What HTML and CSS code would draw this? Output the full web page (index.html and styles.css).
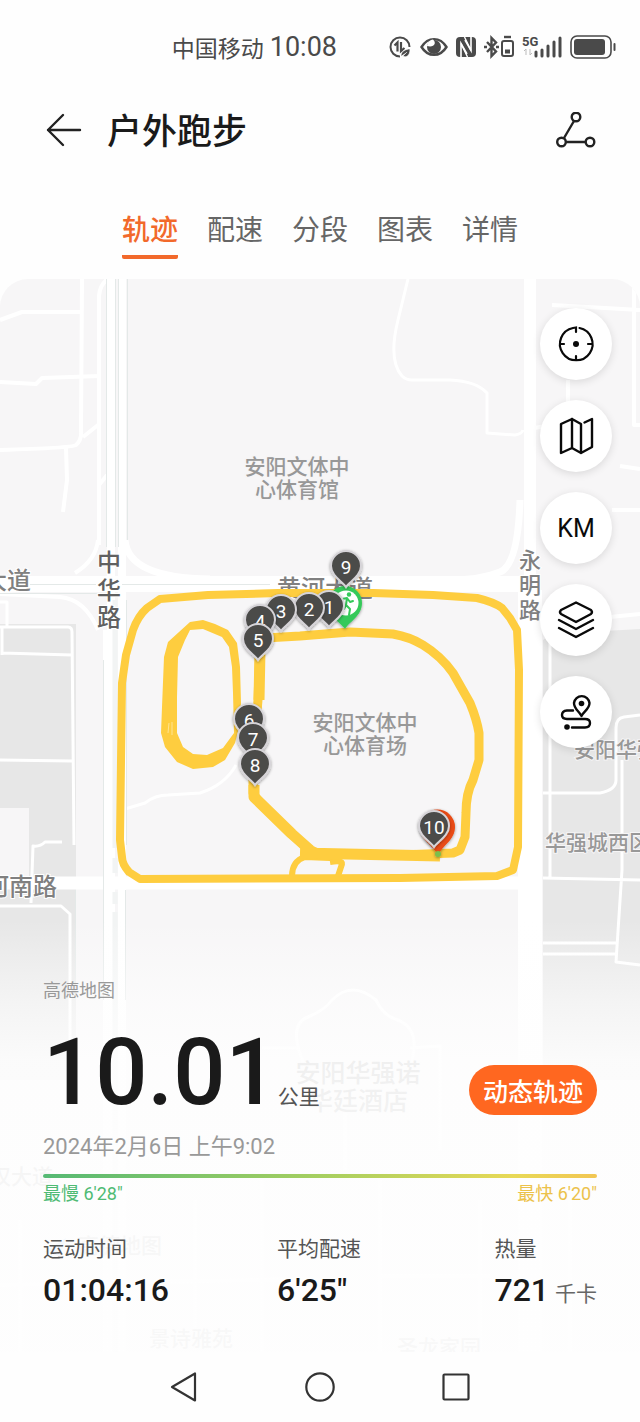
FILE: index.html
```html
<!DOCTYPE html>
<html lang="zh-CN">
<head>
    <meta charset="UTF-8">
    <meta name="viewport" content="width=device-width, initial-scale=1.0">
    <title>户外跑步</title>
    <link rel="stylesheet" href="styles.css">
</head>
<body>
    <div class="status-bar">
        <span class="carrier">中国移动</span>
        <span class="clock">10:08</span>
        <div class="status-icons">
            <svg width="24" height="24" viewBox="0 0 24 24" fill="none" stroke="#4a4a4a" stroke-width="2">
                <path d="M12 21.500A9.500 9.500 0 1 1 21.500 12"/>
                <path d="M6.500 10.500l3-3v9M13 7v9l3.500-3" stroke-width="2.200"/>
                <path d="M13 21c0-5 5-7 9-7 0 7-4 9-7 7l4-4" fill="#4a4a4a" stroke="#fff" stroke-width="0.600"/>
            </svg>
            <svg width="28" height="24" viewBox="0 0 28 24">
                <path d="M1.500 12C8 1.500 20 1.500 26.500 12 20 22.500 8 22.500 1.500 12z" fill="none" stroke="#4a4a4a" stroke-width="2.400"/>
                <circle cx="14" cy="12" r="7" fill="#4a4a4a"/>
                <path d="M13 4.500C17 8 14 13 7 11 8 7 9.500 5 13 4.500z" fill="#fff"/>
            </svg>
            <svg width="20" height="22" viewBox="0 0 20 22">
                <rect x="0" y="1" width="20" height="20" rx="4" fill="#4a4a4a"/>
                <path d="M5 21V7.500L11 18M15 1v13.500L9 4" fill="none" stroke="#fff" stroke-width="1.600"/>
                <path d="M8.500 1L15 14.500M5 7.500L11.500 21" stroke="#fff" stroke-width="1.400"/>
            </svg>
            <svg width="30" height="24" viewBox="0 0 30 24" fill="none" stroke="#4a4a4a" stroke-width="2.400">
                <path d="M3 7l9 9.500-4.500 4.500V3L12 7.500 3 17"/>
                <path d="M0 12h3M12 12h3"/>
                <rect x="18" y="6" width="11" height="15" rx="2" stroke-width="2"/>
                <path d="M20 2h7"/>
                <path d="M21 16.500h5" stroke-width="4"/>
            </svg>
            <svg width="40" height="24" viewBox="0 0 40 24">
                <text x="0" y="11" class="net-type">5G</text>
                <path d="M4 14v6M2 16l2-2M8 14v6l2-2" fill="none" stroke="#bbb" stroke-width="1"/>
                <path d="M14 21v-4M20 21v-6M26 21v-10M32 21v-14M38 21v-18" stroke="#4a4a4a" stroke-width="3" stroke-linecap="round"/>
            </svg>
            <svg width="46" height="24" viewBox="0 0 46 24">
                <rect x="1" y="1" width="40" height="22" rx="6" fill="none" stroke="#4a4a4a" stroke-width="1.600"/>
                <rect x="4" y="4" width="31" height="16" rx="3" fill="#4a4a4a"/>
                <path d="M44.500 9v6" stroke="#4a4a4a" stroke-width="2" stroke-linecap="round"/>
            </svg>
        </div>
    </div>

    <header class="header">
        <button class="icon-btn" aria-label="返回">
            <svg width="36" height="36" viewBox="0 0 36 36" fill="none" stroke="#222" stroke-width="2.400" stroke-linecap="round" stroke-linejoin="round">
                <path d="M34 18H2M17 3L2 18l15 15"/>
            </svg>
        </button>
        <h1>户外跑步</h1>
        <button class="icon-btn" aria-label="分享">
            <svg width="40" height="36" viewBox="0 0 40 36" fill="none" stroke="#222" stroke-width="2.400">
                <circle cx="20" cy="5" r="4.300"/>
                <circle cx="5.500" cy="30" r="4.300"/>
                <circle cx="34" cy="30" r="4.300"/>
                <path d="M18 9L8 26M10 30h20"/>
            </svg>
        </button>
    </header>

    <nav class="tabs">
        <a href="#track" class="tab active">轨迹</a>
        <a href="#pace" class="tab">配速</a>
        <a href="#laps" class="tab">分段</a>
        <a href="#charts" class="tab">图表</a>
        <a href="#detail" class="tab">详情</a>
    </nav>

    <main class="map" id="track">
        <svg class="map-canvas" viewBox="0 279 640 1073" preserveAspectRatio="xMidYMin slice">
            <defs>
                <path id="pin" d="M0 20C-3 15-15 9-15-1A15 15 0 0 1 15-1C15 9 3 15 0 20z"/>
                <filter id="shadow" x="-30%" y="-30%" width="160%" height="160%">
                    <feDropShadow dx="0" dy="1" stdDeviation="1.500" flood-color="#000" flood-opacity="0.4"/>
                </filter>
            </defs>

            <!-- blocks -->
            <rect x="0" y="279" width="640" height="1073" fill="#f7f6f7"/>
            <path d="M0 624H76V1080H0z" fill="#e7e7e7"/>
            <path d="M0 808H29V876H0z" fill="#f7f6f7"/>
            <path d="M552 634L640 629V1080H543V640z" fill="#e7e7e7"/>

            <!-- small roads -->
            <g fill="none" stroke="#fff" stroke-width="4" stroke-linejoin="round">
                <path d="M0 320L22 312 82 312M0 382L36 384 42 378 100 376"/>
                <path d="M82 279L81 430Q82 440 76 445 72 448 0 450M83 437L98 425M66 448L67 480 63 512"/>
                <path d="M99 545V296Q100 284 108 279M99 485L107 475"/>
                <path d="M98 540Q96 560 75 573M0 594L60 597Q85 599 98 630"/>
                <path d="M0 602H7V627M0 627H68Q72 627 72 632L74 845M2 627V655M2 653L72 655M0 760L72 761" stroke-width="3"/>
                <path d="M62 842H45Q40 847 33 846L31 903M0 906L61 906 70 914V1060" stroke-width="3"/>
                <path d="M408 279L398 320Q388 360 402 376 406 380 412 380H450Q476 381 487 393V433L515 435Q522 434 523 430" stroke-width="3"/>
                <path d="M552 305L640 310M568 380V402M634 279V425H640M535 428L545 426M620 466L640 469M612 510H640M610 617L640 614"/>
                <path d="M550 600V878M543 793H600Q616 790 616 780V728Q616 718 624 717L640 715M622 760V870L616 962 640 965M543 878L640 880M543 943H616M543 954H616" stroke-width="3"/>
                <path d="M125 809L145 803Q155 795 168 795L200 793Q225 785 236 765" stroke-width="3"/>
                <path d="M308 1073Q285 1025 308 1017 325 1010 332 1000 352 980 376 1000 383 1015 395 1019 425 1028 408 1073M410 1048L440 1046V1150M262 1048H300" stroke-width="3"/>
                <path d="M0 1285L310 1279M195 1200V1350M262 1180V1352M380 1180V1276L490 1276M380 1276V1352M480 1200V1352M570 1190V1352M20 1220V1352M345 1110V1170"/>
            </g>

            <!-- main roads -->
            <g fill="none" stroke="#fff">
                <path d="M111 279V1352M122 279V1352" stroke-width="8"/>
                <path d="M107 630V1352" stroke-width="8"/>
                <path d="M0 584H535" stroke-width="16"/>
                <path d="M125 540Q128 578 210 579M520 500Q518 565 500 572 480 580 450 580" stroke-width="7"/>
                <path d="M0 883H540" stroke-width="13"/>
                <path d="M530 279V1352" stroke-width="12"/>
                <path d="M521 590V1352M539 590V1352" stroke-width="6"/>
            </g>
            <g fill="none" stroke="#f2f4f4" stroke-width="5">
                <path d="M115 600V848M115 858V873M115 892V904M115 912V1352"/>
            </g>
            <g fill="none" stroke="#e4e9e8" stroke-width="1">
                <path d="M106.500 279V547M115.500 279V547M118.500 279V547M127.500 279V540M126.500 600V845M103.500 660V1000M75.500 890V1000M125.500 890V1000"/>
                <path d="M30 584.500H96M122 584.500H270M0 593.500H98"/>
            </g>

            <!-- place names -->
            <g class="place">
                <text x="297" y="474">安阳文体中</text>
                <text x="297" y="497">心体育馆</text>
                <text x="365" y="730">安阳文体中</text>
                <text x="365" y="753">心体育场</text>
                <text x="574" y="757" text-anchor="start">安阳华强城</text>
                <text x="545" y="850" text-anchor="start">华强城西区</text>
                <text x="-10" y="1184" text-anchor="start">汉大道</text>
                <text x="78" y="1253" text-anchor="start">高德地图</text>
                <text x="191" y="1346">景诗雅苑</text>
                <text x="439" y="1355">圣龙家园</text>
            </g>
            <g class="place large">
                <text x="358" y="1082">安阳华强诺</text>
                <text x="358" y="1110">华廷酒店</text>
            </g>
            <g class="road">
                <text x="31" y="589" text-anchor="end">大道</text>
                <text x="57" y="895" text-anchor="end">河南路</text>
                <text x="325" y="597">黄河大道</text>
            </g>
            <g class="road dark">
                <text x="109" y="571">中</text>
                <text x="109" y="599">华</text>
                <text x="109" y="626">路</text>
            </g>
            <g class="road small">
                <text x="530" y="568">永</text>
                <text x="530" y="593">明</text>
                <text x="530" y="618">路</text>
            </g>
            <path d="M44 1252L66 1238 60 1256z" fill="#7ab8f5"/>

            <!-- running route -->
            <g fill="none" stroke="#fecd3f" stroke-linejoin="round">
                <path d="M122 683L126 655 133 630Q138 616 147 608L160 599 208 595 278 593 373 593 433 595 477 598Q494 602 502 608L510 618 517 630 519 670 518 847 513 870 497 876 400 878 140 879 129 872Q122 864 122 857L120 840z" stroke-width="8"/>
                <path d="M260 645L265 638 300 636 350 632 393 634Q410 637 423 645 441 656 453 673L470 703Q477 720 479 733V760L473 780Q466 793 466 813L465 837 460 850 453 853 400 855 320 854 307 848 290 833 260 803 253 793V760L258 700z" stroke-width="9"/>
                <path d="M330 858L305 857Q292 861 292 876M330 862Q343 860 342 864L338 876" stroke-width="6"/>
                <path d="M254 785V797L292 834 310 850M259 700L260 650M300 853L440 856" stroke-width="11"/>
            </g>
            <path d="M190 622L203 620 215 624 228 630 237 643 240 667 241 703 239 727 235 743 225 760 213 767 193 769 177 762 165 747 161 733 162 707 164 657 168 642zM190 630L185 640 178 657 177 697 177 733 183 747 193 754 207 755 223 748 234 733 233 693 232 667 229 647 222 637 203 629z" fill="#fecd3f" fill-rule="evenodd"/>
            <path d="M169 723L168 733M172 722V735" stroke="#ffe492" stroke-width="1"/>

            <!-- start and finish -->
            <g filter="url(#shadow)">
                <path d="M345 629C341 623 328 616 328 603A17 17 0 0 1 362 603C362 616 349 622 345 629z" fill="#36c95a"/>
                <circle cx="346" cy="603" r="12.500" fill="#fff"/>
                <circle cx="349" cy="594.500" r="2.200" fill="#36c95a"/>
                <path d="M342 602L342 599 347 598 346 605 350 609 349 615M347 598L350 602 353 601M346 605L344 609 340 610" fill="none" stroke="#36c95a" stroke-width="2" stroke-linecap="round" stroke-linejoin="round"/>
            </g>
            <g filter="url(#shadow)">
                <path d="M438 855C434 846 420 840 420 827A17 17 0 0 1 455 827C455 840 442 846 438 855z" fill="#e94b13"/>
                <circle cx="438" cy="854" r="3" fill="#7cbf4b"/>
            </g>

            <!-- kilometre pins -->
            <g class="pins">
                <g transform="translate(329 607)"><use href="#pin"/><text y="7">1</text></g>
                <g transform="translate(309 609)"><use href="#pin"/><text y="7">2</text></g>
                <g transform="translate(281 611)"><use href="#pin"/><text y="7">3</text></g>
                <g transform="translate(260 621)"><use href="#pin"/><text y="7">4</text></g>
                <g transform="translate(258 640)"><use href="#pin"/><text y="7">5</text></g>
                <g transform="translate(249 720)"><use href="#pin"/><text y="7">6</text></g>
                <g transform="translate(253 739)"><use href="#pin"/><text y="7">7</text></g>
                <g transform="translate(255 765)"><use href="#pin"/><text y="7">8</text></g>
                <g transform="translate(346 567)"><use href="#pin"/><text y="7">9</text></g>
                <g transform="translate(434 827)"><use href="#pin"/><text y="7">10</text></g>
            </g>
        </svg>

        <div class="tools">
            <button class="tool" aria-label="定位">
                <svg width="40" height="40" viewBox="0 0 40 40" fill="none" stroke="#0a0a0a" stroke-width="2.200" stroke-linecap="round">
                    <path d="M23.500 4A16.300 16.300 0 1 1 17 4M17 4L20 3.500V8M20 32v4M4 20h4M32 20h4"/>
                    <circle cx="20" cy="20" r="3" fill="#0a0a0a" stroke="none"/>
                </svg>
            </button>
            <button class="tool" aria-label="地图类型">
                <svg width="40" height="40" viewBox="0 0 40 40" fill="none" stroke="#0a0a0a" stroke-width="2.400" stroke-linecap="round" stroke-linejoin="round">
                    <path d="M28.500 6.500L36 3v28l-11 6-9-5-11 5V8l11-5 9 5v29M16 3v29"/>
                </svg>
            </button>
            <button class="tool">KM</button>
            <button class="tool" aria-label="图层">
                <svg width="40" height="40" viewBox="0 0 40 40" fill="none" stroke="#0a0a0a" stroke-width="2.400" stroke-linecap="round" stroke-linejoin="round">
                    <path d="M20 2.500L35 10Q37 12 35 14L20 22 5 14Q3 12 5 10zM3 20l17 9 17-9M3 28l17 9 17-9"/>
                </svg>
            </button>
            <button class="tool" aria-label="路线">
                <svg width="40" height="40" viewBox="0 0 40 40" fill="none" stroke="#0a0a0a" stroke-width="2.400" stroke-linecap="round" stroke-linejoin="round">
                    <path d="M25.500 24C23 19 18 17 18 11A7.800 7.800 0 0 1 33.500 11C33.500 17 28 19 25.500 24z"/>
                    <circle cx="25.500" cy="11.500" r="2.800" fill="#0a0a0a" stroke="none"/>
                    <path d="M17 18.500H11Q6 19 6 23 6 27 11 27H29Q34 27 34 31 34 35.500 29 35.500H16"/>
                    <circle cx="11" cy="35" r="2.800" fill="#0a0a0a" stroke="none"/>
                </svg>
            </button>
        </div>

        <section class="summary">
            <div class="source">高德地图</div>
            <div class="distance-row">
                <div class="distance"><strong>10.01</strong><span>公里</span></div>
                <button class="play-btn">动态轨迹</button>
            </div>
            <div class="date">2024年2月6日 上午9:02</div>
            <div class="pace-bar"></div>
            <div class="pace-labels">
                <span class="slowest">最慢 6'28"</span>
                <span class="fastest">最快 6'20"</span>
            </div>
            <dl class="stats">
                <div>
                    <dt>运动时间</dt>
                    <dd>01:04:16</dd>
                </div>
                <div>
                    <dt>平均配速</dt>
                    <dd>6'25"</dd>
                </div>
                <div>
                    <dt>热量</dt>
                    <dd>721<span>千卡</span></dd>
                </div>
            </dl>
        </section>
    </main>

    <footer class="system-nav">
        <button class="icon-btn" aria-label="返回">
            <svg width="30" height="32" viewBox="0 0 30 32" fill="none" stroke="#333" stroke-width="2.200" stroke-linejoin="round">
                <path d="M26 2.500V29.500L3 16z"/>
            </svg>
        </button>
        <button class="icon-btn" aria-label="主页">
            <svg width="30" height="32" viewBox="0 0 30 32" fill="none" stroke="#333" stroke-width="2.200">
                <circle cx="15" cy="16" r="13.700"/>
            </svg>
        </button>
        <button class="icon-btn" aria-label="最近任务">
            <svg width="30" height="32" viewBox="0 0 30 32" fill="none" stroke="#333" stroke-width="2.200">
                <rect x="2.500" y="3.500" width="25" height="25" rx="1"/>
            </svg>
        </button>
    </footer>
</body>
</html>
```
FILE: styles.css
```css
* {
    box-sizing: border-box;
}
body {
    margin: 0;
    background-color: #fefefe;
    color: #1a1a1a;
    font-family: Roboto, "Noto Sans CJK SC", sans-serif;
}
button {
    font-family: inherit;
    border: none;
    cursor: pointer;
}
svg {
    display: block;
}
.status-bar {
    display: flex;
    align-items: center;
    justify-content: flex-end;
    height: 94px;
    padding-right: 24px;
    color: #4a4a4a;
}
.carrier {
    margin-right: 6px;
    font-size: 23px;
}
.clock {
    margin-right: 51px;
    font-size: 27px;
}
.status-icons {
    display: flex;
    align-items: center;
    gap: 8px;
}
.net-type {
    font-size: 13px;
    font-weight: bold;
    fill: #4a4a4a;
}
.header {
    display: flex;
    align-items: center;
    height: 72px;
    padding: 0 44px 0 46px;
}
.header h1 {
    flex: 1;
    margin: 0 0 4px 25px;
    font-size: 35px;
    font-weight: 500;
}
.icon-btn {
    padding: 0;
    background: none;
}
.tabs {
    display: flex;
    justify-content: center;
    gap: 29px;
    height: 113px;
    padding-top: 41px;
}
.tab {
    height: 52px;
    font-size: 28px;
    line-height: 48px;
    color: #666;
    text-decoration: none;
}
.tab.active {
    color: #f2692b;
    font-weight: 500;
    background: linear-gradient(#f2692b, #f2692b) bottom / 100% 4px no-repeat;
    border-radius: 2px;
}
.map {
    position: relative;
    overflow: hidden;
    border-radius: 28px 28px 0 0;
    padding-top: 29px;
}
.map-canvas {
    position: absolute;
    top: 0;
    left: 0;
    width: 100%;
    height: 100%;
}
.place {
    font-size: 21px;
    font-weight: 500;
    fill: #989898;
    stroke: #f6f5f6;
    stroke-width: 2px;
    paint-order: stroke;
    text-anchor: middle;
}
.place.large {
    font-size: 25px;
}
.road {
    font-size: 24px;
    font-weight: 500;
    fill: #808080;
    stroke: #fff;
    stroke-width: 2px;
    paint-order: stroke;
    text-anchor: middle;
}
.road.dark {
    fill: #606060;
}
.road.small {
    font-size: 22px;
}
.pins use {
    fill: #4c4b49;
    stroke: #d6d4d8;
    stroke-width: 2px;
    filter: url(#shadow);
}
.pins text {
    font-size: 19px;
    fill: #fff;
    text-anchor: middle;
}
.tools {
    position: relative;
    display: flex;
    flex-direction: column;
    align-items: flex-end;
    gap: 20px;
    padding-right: 28px;
}
.tool {
    display: flex;
    align-items: center;
    justify-content: center;
    width: 72px;
    height: 72px;
    padding: 0;
    border-radius: 50%;
    background-color: #fff;
    box-shadow: 0 2px 8px rgba(0,0,0,0.12);
    color: #0a0a0a;
    font-size: 25px;
}
.summary {
    position: relative;
    margin-top: 172px;
    padding: 56px 43px 38px;
    background: linear-gradient(rgba(254,254,254,0), rgba(254,254,254,0.55) 80px, rgba(254,254,254,0.86) 140px, rgba(254,254,254,0.92) 270px, rgba(254,254,254,0.94));
}
.source {
    font-size: 18px;
    line-height: 30px;
    color: #999;
}
.distance-row {
    display: flex;
    align-items: center;
    justify-content: space-between;
    height: 118px;
    margin-top: 8px;
}
.distance {
    display: flex;
    align-items: baseline;
}
.distance strong {
    font-size: 92px;
    font-weight: 500;
    line-height: 112px;
}
.distance span {
    font-size: 21px;
    color: #555;
}
.play-btn {
    height: 50px;
    margin-top: 34px;
    padding: 0 14px;
    border-radius: 25px;
    background-color: #ff6720;
    color: #fff;
    font-size: 25px;
    font-weight: 500;
}
.date {
    font-size: 22px;
    line-height: 30px;
    color: #999;
}
.pace-bar {
    height: 4px;
    margin-top: 12px;
    border-radius: 2px;
    background: linear-gradient(to right, #55b974, #a6cf60 50%, #e8d957 85%, #f2c653);
}
.pace-labels {
    display: flex;
    justify-content: space-between;
    font-size: 18px;
    line-height: 32px;
}
.slowest {
    color: #4fbb74;
}
.fastest {
    color: #ecc24b;
}
.stats {
    display: grid;
    grid-template-columns: 14fr 13fr auto;
    margin: 24px 0 0;
}
.stats dt {
    font-size: 21px;
    line-height: 30px;
    color: #555;
}
.stats dd {
    margin: 6px 0 0;
    font-size: 32px;
    font-weight: 500;
    line-height: 40px;
}
.stats dd span {
    margin-left: 6px;
    font-size: 21px;
    font-weight: 400;
    color: #666;
}
.system-nav {
    display: flex;
    align-items: center;
    justify-content: center;
    gap: 106px;
    height: 70px;
}
```
